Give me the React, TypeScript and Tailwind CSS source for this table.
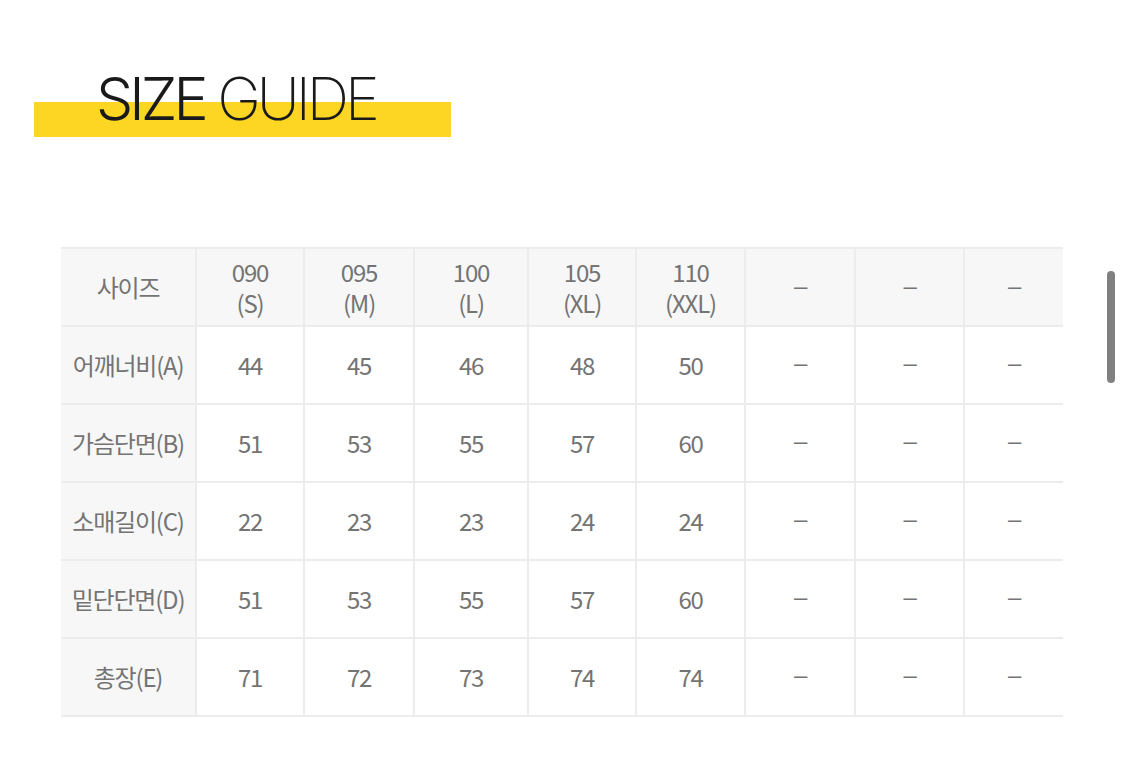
const cols = ['090\n(S)', '095\n(M)', '100\n(L)', '105\n(XL)', '110\n(XXL)', '–', '–', '–'];
const widths = ['w-[135px]', 'w-[108px]', 'w-[110px]', 'w-[114px]', 'w-[108px]', 'w-[109px]', 'w-[110px]', 'w-[109px]', 'w-[99px]'];

const rows: [string, string[]][] = [
  ['어깨너비(A)', ['44', '45', '46', '48', '50']],
  ['가슴단면(B)', ['51', '53', '55', '57', '60']],
  ['소매길이(C)', ['22', '23', '23', '24', '24']],
  ['밑단단면(D)', ['51', '53', '55', '57', '60']],
  ['총장(E)', ['71', '72', '73', '74', '74']],
];

const font = { fontFamily: '"Noto Sans CJK KR", "Noto Sans", sans-serif' };

function Dash() {
  return <span className="relative -top-[3px]" style={{ fontFamily: '"Liberation Sans", sans-serif' }}>–</span>;
}

export default function App() {
  return (
    <div className="relative w-[1125px] h-[762px] bg-white overflow-hidden" style={font}>
      {/* 타이틀 */}
      <div className="pt-[102px] pl-[34px]">
        <div className="flow-root w-[417px] h-[35px] bg-[#fdd523]">
          <h1
            className="-mt-[33px] ml-[62px] text-[59px] leading-none font-extralight tracking-[-4px] text-[#1a1a1a] whitespace-nowrap"
            style={{ fontFamily: 'Inter, sans-serif' }}
          >
            <span className="font-light">SIZE</span> GUIDE
          </h1>
        </div>
      </div>

      {/* 사이즈표 */}
      <table className="mt-[110px] ml-[61px] border-collapse table-fixed text-[#747474] text-[24px] tracking-[-1.2px]">
        <thead>
          <tr className="h-[78px] bg-[#f7f7f7]">
            <th className={`${widths[0]} font-normal border-y-2 border-r-2 border-[#ececec]`}>사이즈</th>
            {cols.map((c, i) => (
              <th
                key={i}
                className={`${widths[i + 1]} font-normal leading-[31px] whitespace-pre-line border-y-2 border-[#ececec] ${i < 7 ? 'border-r-2' : ''}`}
              >
                {c === '–' ? <Dash /> : c}
              </th>
            ))}
          </tr>
        </thead>
        <tbody>
          {rows.map(([label, vals]) => (
            <tr key={label} className="h-[78px]">
              <td className="bg-[#f7f7f7] text-center border-y-2 border-r-2 border-[#ececec]">{label}</td>
              {[...vals, '–', '–', '–'].map((v, i) => (
                <td key={i} className={`text-center border-y-2 border-[#ececec] ${i < 7 ? 'border-r-2' : ''}`}>
                  {v === '–' ? <Dash /> : v}
                </td>
              ))}
            </tr>
          ))}
        </tbody>
      </table>

      {/* 스크롤바 */}
      <div className="absolute left-[1107px] top-[271px] w-[8px] h-[112px] rounded-full bg-[#808080]" />
    </div>
  );
}
